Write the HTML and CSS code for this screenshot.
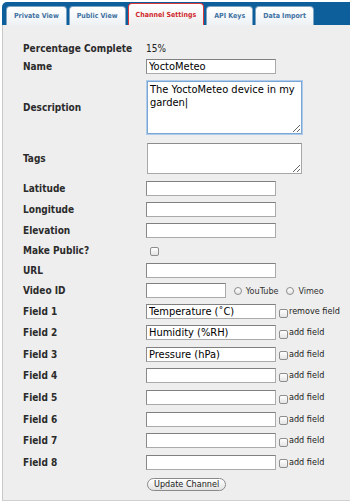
FILE: index.html
```html
<!DOCTYPE html>
<html lang="en">
<head>
  <meta charset="UTF-8">
  <meta name="viewport" content="width=device-width, initial-scale=1.0">
  <title>Channel Settings</title>
  <link rel="stylesheet" href="styles.css">
</head>
<body>
  <div class="panel">
    <ul class="tabs">
      <li class="tab">Private View</li>
      <li class="tab">Public View</li>
      <li class="tab active">Channel Settings</li>
      <li class="tab">API Keys</li>
      <li class="tab">Data Import</li>
    </ul>

    <div class="content">
      <table class="settings">
        <tr class="first">
          <th>Percentage Complete</th>
          <td>15%</td>
        </tr>
        <tr class="short">
          <th>Name</th>
          <td><input type="text" class="text" value="YoctoMeteo"></td>
        </tr>
        <tr>
          <th>Description</th>
          <td><textarea class="area focus">The YoctoMeteo device in my garden|</textarea></td>
        </tr>
        <tr>
          <th>Tags</th>
          <td><textarea class="area tags"></textarea></td>
        </tr>
        <tr class="tall">
          <th>Latitude</th>
          <td><input type="text" class="text"></td>
        </tr>
        <tr>
          <th>Longitude</th>
          <td><input type="text" class="text"></td>
        </tr>
        <tr>
          <th>Elevation</th>
          <td><input type="text" class="text"></td>
        </tr>
        <tr class="short">
          <th>Make Public?</th>
          <td><span class="check public"></span></td>
        </tr>
        <tr class="url">
          <th>URL</th>
          <td><input type="text" class="text"></td>
        </tr>
        <tr>
          <th>Video ID</th>
          <td class="inline">
            <input type="text" class="text video">
            <span class="radio"></span><span class="opt">YouTube</span>
            <span class="radio"></span><span class="opt">Vimeo</span>
          </td>
        </tr>
        <tr>
          <th>Field 1</th>
          <td class="inline"><input type="text" class="text" value="Temperature (˚C)"><span class="check"></span><span class="note">remove field</span></td>
        </tr>
        <tr class="field">
          <th>Field 2</th>
          <td class="inline"><input type="text" class="text" value="Humidity (%RH)"><span class="check"></span><span class="note">add field</span></td>
        </tr>
        <tr class="field">
          <th>Field 3</th>
          <td class="inline"><input type="text" class="text" value="Pressure (hPa)"><span class="check"></span><span class="note">add field</span></td>
        </tr>
        <tr class="field">
          <th>Field 4</th>
          <td class="inline"><input type="text" class="text"><span class="check"></span><span class="note">add field</span></td>
        </tr>
        <tr class="field">
          <th>Field 5</th>
          <td class="inline"><input type="text" class="text"><span class="check"></span><span class="note">add field</span></td>
        </tr>
        <tr class="field">
          <th>Field 6</th>
          <td class="inline"><input type="text" class="text"><span class="check"></span><span class="note">add field</span></td>
        </tr>
        <tr class="field">
          <th>Field 7</th>
          <td class="inline"><input type="text" class="text"><span class="check"></span><span class="note">add field</span></td>
        </tr>
        <tr class="field">
          <th>Field 8</th>
          <td class="inline"><input type="text" class="text"><span class="check"></span><span class="note">add field</span></td>
        </tr>
        <tr class="tall">
          <th></th>
          <td><button class="update">Update Channel</button></td>
        </tr>
      </table>
    </div>
  </div>
</body>
</html>
```

FILE: styles.css
```css
body {
  margin: 0;
  padding: 0;
  background: #fff;
  font-family: "DejaVu Sans Condensed", "Liberation Sans", sans-serif;
  color: #222;
}

.panel {
  margin: 2px 0 0 2px;
  height: 499px;
  display: flex;
  flex-direction: column;
}

/* blue tab strip */
.tabs {
  list-style: none;
  margin: 0;
  padding: 0 0 0 4px;
  height: 23px;
  flex-shrink: 0;
  background: #0d5f9c;
  border-radius: 5px 0 0 0;
  display: flex;
  align-items: flex-end;
  gap: 2px;
}

.tab {
  flex-shrink: 0;
  white-space: nowrap;
  height: 18px;
  line-height: 18px;
  padding: 0 7px;
  background: linear-gradient(#ffffff, #eef2f5);
  border: 1px solid #7ea4c4;
  border-bottom: none;
  border-radius: 4px 4px 0 0;
  font-size: 7px;
  font-weight: bold;
  color: #3f72a3;
}

.tab.active {
  height: 21px;
  line-height: 23px;
  padding: 0 7px;
  border-color: #d8383a;
  color: #d0282c;
  background: linear-gradient(#ffffff, #eeeeee);
}

.content {
  flex: 1;
  background: #eeeeee;
  border-left: 1px solid #c8c8c8;
  border-bottom: 1px solid #d0d0d0;
  padding: 14px 0 0 20px;
}

.settings {
  border-collapse: collapse;
  font-size: 10px;
}

.settings th {
  width: 123px;
  padding: 0;
  text-align: left;
  font-weight: bold;
  color: #2b2b2b;
  vertical-align: middle;
}

.settings td {
  height: 21px;
  padding: 0;
  vertical-align: middle;
}

.settings tr.first td {
  height: 18px;
}

.settings tr.short td {
  height: 19px;
}

.settings tr.url td {
  height: 20px;
}

.settings tr.tall td {
  height: 22px;
}

.settings tr.field td {
  height: 21.6px;
}

.settings td.inline {
  white-space: nowrap;
}

.text {
  box-sizing: border-box;
  width: 130px;
  height: 15px;
  margin: 0;
  padding: 0 2px;
  border: 1px solid #aaaaaa;
  border-top-color: #808080;
  border-left-color: #8a8a8a;
  background: #fff;
  font-family: inherit;
  font-size: 11px;
  color: #000;
  vertical-align: middle;
}

.text.video {
  width: 80px;
}

.area {
  display: block;
  box-sizing: border-box;
  width: 155px;
  margin: 4px 0 4px 1px;
  padding: 1px 2px;
  border: 1px solid #a8a8a8;
  border-top-color: #8c8c8c;
  background: #fff;
  font-family: inherit;
  font-size: 11px;
  line-height: 13px;
  color: #000;
  resize: vertical;
}

.area.focus {
  height: 53px;
  margin-top: 5px;
  margin-bottom: 5px;
  border: 1px solid #7aa6d6;
  box-shadow: 0 0 0 1px #aecbeb;
}

.area.tags {
  height: 31px;
  margin-bottom: 3px;
}

.check {
  display: inline-block;
  box-sizing: border-box;
  width: 9px;
  height: 9px;
  margin: 0 1px 0 3px;
  border: 1px solid #8d8d8d;
  border-radius: 2px;
  background: linear-gradient(#ffffff, #e4e4e4);
  vertical-align: -3px;
}

.check.public {
  margin-left: 4px;
  vertical-align: middle;
}

.radio {
  display: inline-block;
  box-sizing: border-box;
  width: 8px;
  height: 8px;
  margin: 0 4px 0 5px;
  border: 1px solid #8d8d8d;
  border-radius: 50%;
  background: linear-gradient(#ffffff, #e4e4e4);
  vertical-align: middle;
}

.opt {
  font-size: 9px;
  color: #333;
  vertical-align: middle;
}

.note {
  font-size: 9px;
  color: #222;
  vertical-align: 1px;
}

.update {
  margin: 1px 0 0 1px;
  height: 13px;
  padding: 0 6px;
  border: 1px solid #8a8a8a;
  border-radius: 7px;
  background: linear-gradient(#ffffff, #e2e2e2);
  font-family: inherit;
  font-size: 9px;
  line-height: 11px;
  color: #222;
}
```
